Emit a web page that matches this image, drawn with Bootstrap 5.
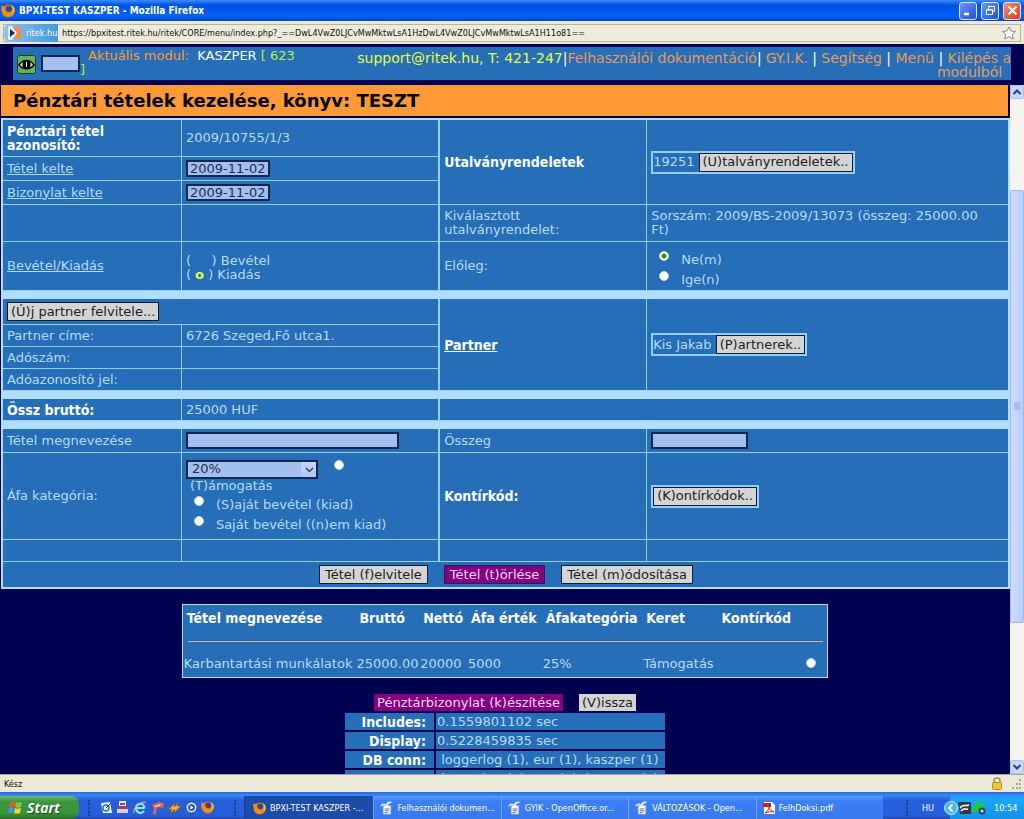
<!DOCTYPE html>
<html lang="hu">
<head>
<meta charset="utf-8">
<meta name="viewport" content="width=device-width, initial-scale=1">
<title>BPXI-TEST KASZPER</title>
<link href="https://cdn.jsdelivr.net/npm/bootstrap@5.3.0/dist/css/bootstrap.min.css" rel="stylesheet">
<style>
:root{--blue:#266eb7;--line:#8fd0ff;--pale:#b0deff;--navy:#000050;--field:#a3bff0;--orange:#ff9a36}
body{font:13px/14px "DejaVu Sans",Verdana,sans-serif;background:var(--navy);color:#b4dcff}
a{color:inherit}
.titlebar{height:21px;background:linear-gradient(#3a8cff,#0050e0 25%,#0062fa 75%,#0048c8);color:#fff;font:bold 10px/20px "DejaVu Sans Condensed",Tahoma,sans-serif;padding:0 3px 0 1px}
.winbtn{width:18px;height:18px;padding:0;border:1px solid #dce8ff;border-radius:3px;background:linear-gradient(135deg,#6c96f0,#2250d0);line-height:0}
.winbtn.close-x{background:linear-gradient(135deg,#f09070,#d83c18)}
.urlbar{height:23px;background:#ece9d8;padding:3px 3px 2px;font:9px/16px "DejaVu Sans Condensed",Tahoma,sans-serif;color:#111}
.urlbox{border:1px solid #b8b5a0;background:#eeebdd}
.site{width:54px;height:18px;background:linear-gradient(90deg,#8cc4f4,#4497e0);border-radius:6px 0 0 6px;color:#fff}
.apphead{margin:3px 13px 5px;min-height:33px;background:var(--blue);font-size:14px;line-height:14px;color:var(--orange)}
.apphead a{text-decoration:none;color:#e89a58}
.lime{color:#b4f43c}.yel{color:#e6ff3c}
.modname{padding-top:2px;margin-right:auto;font-size:13px}
.modname div{text-indent:8px}
.field{background:var(--field);border:2px solid #14284c;border-radius:0;height:17px;padding:0 2px;font:inherit;color:#20304e;min-width:0}
.work{background:var(--navy);overflow:hidden;min-height:0}
.band{background:var(--orange);color:#000;font-weight:bold;font-size:18px;line-height:31px;margin:0 2px 2px 1px;padding-left:12px}
.form-grid{width:calc(100% - 1px);margin-left:1px;table-layout:fixed;border-collapse:separate;border-spacing:0;border:2px solid var(--pale)}
.form-grid td,.form-grid th{background:var(--blue);border-right:1px solid var(--line);border-bottom:1px solid var(--line);padding:0 3px 0 4px;vertical-align:middle;font-weight:normal;height:24px}
.form-grid .half{border-right-width:2px}
.form-grid .fin{border-right:0}
.form-grid .str,.items th,.stats th{font:bold 14px/14px "DejaVu Sans Condensed",Verdana,sans-serif;color:#fff}
.form-grid .gap td{background:var(--pale);height:8px;border:0;line-height:0}
.form-grid .tall td,.form-grid .tall th{height:37px}
.form-grid .mid td,.form-grid .mid th{height:49px}
.form-grid .mid td{padding-top:3px}
.form-grid .big td,.form-grid .big th{height:87px}
.form-grid .low td,.form-grid .low th{height:22px}
.form-grid .fresh .half{height:26px}
.form-grid .act td{height:25px;border-bottom:0}
.key{border:1px solid #141c28;border-radius:0;background:#d4d4d4;color:#222;font:inherit;height:19px;line-height:14px;padding:0 3px;white-space:nowrap}
.act .key{padding:0 5px}
.key.purple{background:#800080;color:#ffd4ff;border-color:#3c1450}
.key.flat{border:0;height:17px}
.framed{border:2px solid var(--line);height:23px}
.dot{appearance:none;width:10px;height:10px;border-radius:50%;background:#fff;border:1px solid #d4d4cc;margin:0;flex:none}
.dot:checked{background:radial-gradient(circle,#389018 0 2px,#fff 3px)}
.opt{height:20px}
.opt label{padding-top:5px}
.opt .dot{margin-top:3px}
.afa{width:132px;height:19px;appearance:none;padding:0 4px;background:linear-gradient(#c4d6fc,#b4c8f4) right/15px 100% no-repeat,var(--field)}
.chev{right:4px;top:6px;pointer-events:none}
.items{width:64%;margin:15px auto 0;table-layout:fixed;background:var(--blue);border:1px solid var(--pale);border-collapse:separate;border-spacing:0;white-space:nowrap}
.items th{padding:6px 0 0 4px;height:26px;vertical-align:top}
.items td{padding:0 0 0 1px;height:26px}
.items .rule{height:20px}
.items hr{margin:0 4px;border:0;border-top:1px solid #4c5c70;border-bottom:1px solid #a8c8e8;opacity:1;height:2px}
.stats{width:324px;border-collapse:separate;border-spacing:2px;white-space:nowrap}
.stats th,.stats td{background:var(--blue);height:17px;padding:0 1px;line-height:14px}
.stats th{width:89px;text-align:right;padding-right:8px}
.sbar{width:14px;background:#f4f3ee}
.sbtn{height:14px;border:1px solid #a8c0f8;border-radius:2px;background:#c8d8fc;padding:0;line-height:0}
.thumb{background:linear-gradient(90deg,#d0dcfe,#b8ccfa);border:1px solid #a0b8f0;border-radius:2px;flex:433}
.before{flex:91}.after{flex:138}
.status{height:18px;background:#ece9d8;border-top:1px solid #a8a694;color:#111;font:9px/16px "DejaVu Sans Condensed",Tahoma,sans-serif;padding:0 2px 0 4px}
.taskbar{height:27px;background:linear-gradient(#2a68d8,#3c88f4 12%,#2560dc 30%,#245edc 85%,#1c48b0);color:#fff;font:9px/22px "DejaVu Sans Condensed",Tahoma,sans-serif}
.start{width:79px;border:0;background:linear-gradient(#6cb86c,#3c963c 25%,#389438 75%,#287028);border-radius:0 8px 8px 0;color:#fff;font:italic bold 14px/22px "Open Sans",sans-serif;padding:0 8px;text-shadow:1px 1px 1px #1c401c}
.quick{width:165px;padding:0 6px 0 17px}
.grip{width:4px;border-left:2px dotted #163c98;height:16px}
.grip.first{margin-left:-8px}
.task{flex:1 1 0;min-width:0;border:0;border-left:1px solid #6ca4fc;background:linear-gradient(#5c9cff,#3c80f4 20%,#3878f0);color:#fff;font:inherit;text-align:left;padding:0 6px;overflow:hidden;white-space:nowrap}
.task.now{background:#1c4caa;border-color:#143c90;padding-left:8px}
.tray{background:linear-gradient(#1c9cf0,#18a8f8 20%,#1290e8);width:74px}
.tray .back{margin-left:-6px}
</style>
</head>
<body class="vh-100 d-flex flex-column overflow-hidden">
<svg class="d-none" aria-hidden="true">
<symbol id="fox" viewBox="0 0 14 14"><circle cx="7" cy="7" r="6.500" fill="#e86a14"/><circle cx="7.6" cy="5.6" r="3.600" fill="#2c4a90"/><path d="M.5 1c2 2 2 1 4.500 2-1 2 0 5 3 5 2 0 3.500-2 3.500-4 2 3 2 6 0 7.500C7 15-1 12 .5 1z" fill="#f48c1c"/><path d="M10 1c4 1 5 6 2 9 0-3 0-6-2-9z" fill="#fcc030"/></symbol>
<symbol id="doc" viewBox="0 0 14 14"><path d="M3.500 4.500h8v9h-8z" fill="#fff" stroke="#abc"/><path d="M5 8h5M5 10h5M5 12h3" stroke="#567"/><path d="M.5 5c2-3 4-3 6-1 1-4 4-4 6-3-2 0-4 1-5 4-2-2-4-2-7 0z" fill="#fff" stroke="#e8f0ff"/></symbol>
</svg>

<header class="titlebar d-flex align-items-center flex-shrink-0">
<svg width="14" height="14" class="me-1 flex-shrink-0"><use href="#fox"/></svg><span class="me-auto">BPXI-TEST KASZPER - Mozilla Firefox</span>
<div class="d-flex gap-1">
<button class="winbtn" aria-label="Kis méret"><svg width="15" height="15"><path d="M3 11h5" stroke="#fff" stroke-width="2.5"/></svg></button>
<button class="winbtn" aria-label="Előző méret"><svg width="15" height="15" fill="none" stroke="#fff"><path d="M5.500 6V3.500h6v5H10M3.500 6.500h6v5h-6zM3 7h7"/></svg></button>
<button class="winbtn close-x" aria-label="Bezárás"><svg width="15" height="15"><path d="M3.500 3.500l8 8m0-8l-8 8" stroke="#fff" stroke-width="2"/></svg></button>
</div>
</header>

<div class="urlbar flex-shrink-0">
<div class="urlbox d-flex align-items-center h-100">
<div class="site d-flex align-items-center ps-1 flex-shrink-0"><svg width="14" height="14" class="me-1"><path d="M3 1h10v12H3z" fill="#f48c48"/><path d="M0 0h4l5 7-5 7H0z" fill="#dcecff"/><path d="M2 3l5 4-5 4z" fill="#1c2c54"/></svg>ritek.hu</div>
<span class="me-auto ps-1 text-nowrap">https://bpxitest.ritek.hu/ritek/CORE/menu/index.php?_==DwL4VwZ0LJCvMwMktwLsA1HzDwL4VwZ0LJCvMwMktwLsA1H11o81==</span>
<svg width="14" height="14" class="me-1" viewBox="0 0 14 14"><path d="M7 1l2 4 4.500.500-3.300 3 1 4.500L7 10.800 2.800 13l1-4.500-3.300-3L5 5z" fill="#fff" stroke="#888"/></svg>
</div>
</div>

<div class="apphead d-flex flex-shrink-0">
<svg width="20" height="20" class="flex-shrink-0 ms-1 mt-2"><rect x=".5" y=".5" width="18" height="18" rx="2" fill="#62b45a" stroke="#1c401c"/><path d="M2 10c4-6 11-6 15 0-4 5-11 5-15 0z" fill="#c8e8b8" stroke="#000" stroke-width="1.500"/><circle cx="9.500" cy="9.500" r="4" fill="#000"/><path d="M9.500 7v5" stroke="#dfd"/></svg>
<input class="field flex-shrink-0 ms-1 mt-2" style="width:39px" aria-label="Modul kód">
<div class="modname"><div><span>Aktuális modul:</span>&nbsp; <span class="text-white">KASZPER</span> <span class="lime">[ 623</span></div><span class="lime">]</span></div>
<div class="text-end text-white pt-1" style="width:68%"><span class="yel">support@ritek.hu, T: 421-247</span>|<a href="#">Felhasználói dokumentáció</a>|<a href="#" class="px-1">GY.I.K.</a>| <a href="#">Segítség</a> | <a href="#">Menü</a> | <a href="#">Kilépés a<br>modulból</a>&nbsp;&nbsp;</div>
</div>

<div class="d-flex flex-grow-1 overflow-hidden">
<main class="work flex-grow-1">
<h1 class="band">Pénztári tételek kezelése, könyv: TESZT</h1>
<table class="form-grid">
<colgroup><col style="width:17.8%"><col style="width:25.7%"><col style="width:20.6%"><col style="width:35.9%"></colgroup>
<tr class="tall"><th class="str">Pénztári tétel<br>azonosító:</th><td class="half">2009/10755/1/3</td><th class="str" rowspan="3">Utalványrendeletek</th><td class="fin" rowspan="3"><div class="framed d-inline-flex align-items-center"><span class="pe-1">19251</span><button class="key">(U)talványrendeletek..</button></div></td></tr>
<tr><th><a href="#">Tétel kelte</a></th><td class="half"><input class="field" style="width:84px" value="2009-11-02" aria-label="Tétel kelte"></td></tr>
<tr><th><a href="#">Bizonylat kelte</a></th><td class="half"><input class="field" style="width:84px" value="2009-11-02" aria-label="Bizonylat kelte"></td></tr>
<tr class="tall"><td></td><td class="half"></td><th>Kiválasztott<br>utalványrendelet:</th><td class="fin">Sorszám: 2009/BS-2009/13073 (összeg: 25000.00<br>Ft)</td></tr>
<tr class="mid"><th><a href="#">Bevétel/Kiadás</a></th><td class="half">(&nbsp;&nbsp;&nbsp; &nbsp;) Bevétel<br>( <b class="yel">o</b> ) Kiadás</td><th>Előleg:</th><td class="fin">
<div class="opt d-flex ps-2"><input class="dot" type="radio" name="elo" id="nem" checked><label class="ms-2 ps-1" for="nem">Ne(m)</label></div>
<div class="opt d-flex ps-2"><input class="dot" type="radio" name="elo" id="igen"><label class="ms-2 ps-1" for="igen">Ige(n)</label></div></td></tr>
<tr class="gap"><td colspan="4"></td></tr>
<tr class="fresh"><td class="half" colspan="2"><button class="key d-block">(Ú)j partner felvitele...</button></td><th class="str" rowspan="4"><a href="#">Partner</a></th><td class="fin" rowspan="4"><div class="framed d-inline-flex align-items-center">Kis Jakab&nbsp;<button class="key">(P)artnerek..</button></div></td></tr>
<tr class="low"><th>Partner címe:</th><td class="half">6726 Szeged,Fő utca1.</td></tr>
<tr class="low"><th>Adószám:</th><td class="half"></td></tr>
<tr class="low"><th>Adóazonosító jel:</th><td class="half"></td></tr>
<tr class="gap"><td colspan="4"></td></tr>
<tr class="low"><th class="str">Össz bruttó:</th><td class="half">25000 HUF</td><td class="fin" colspan="2"></td></tr>
<tr class="gap"><td colspan="4"></td></tr>
<tr><th><label for="megn">Tétel megnevezése</label></th><td class="half"><input class="field" style="width:213px" id="megn"></td><th><label for="ossz">Összeg</label></th><td class="fin"><input class="field" style="width:97px" id="ossz"></td></tr>
<tr class="big"><th><label for="afa">Áfa kategória:</label></th><td class="half">
<div class="d-flex"><div class="position-relative"><select class="field afa" id="afa"><option>20%</option></select><svg class="chev position-absolute" width="9" height="8"><path d="M1 2l3.500 3.500L8 2" fill="none" stroke="#346" stroke-width="1.500"/></svg></div><input class="dot ms-3" type="radio" name="keret" id="tam"></div>
<div class="ps-1"><label for="tam">(T)ámogatás</label></div>
<div class="opt d-flex ps-2"><input class="dot" type="radio" name="keret" id="sk"><label class="ms-2 ps-1" for="sk">(S)aját bevétel (kiad)</label></div>
<div class="opt d-flex ps-2"><input class="dot" type="radio" name="keret" id="sn"><label class="ms-2 ps-1" for="sn">Saját bevétel ((n)em kiad)</label></div></td>
<th class="str">Kontírkód:</th><td class="fin"><div class="framed d-inline-flex align-items-center"><button class="key">(K)ontírkódok..</button></div></td></tr>
<tr class="low"><td></td><td class="half"></td><td></td><td class="fin"></td></tr>
<tr class="act"><td class="fin" colspan="4"><div class="d-flex justify-content-center gap-3"><button class="key">Tétel (f)elvitele</button><button class="key purple">Tétel (t)örlése</button><button class="key">Tétel (m)ódosítása</button></div></td></tr>
</table>

<table class="items">
<colgroup><col style="width:26.8%"><col style="width:9.9%"><col style="width:7.4%"><col style="width:11.6%"><col style="width:15.6%"><col style="width:11.7%"><col style="width:13.6%"><col></colgroup>
<tr><th>Tétel megnevezése</th><th>Bruttó</th><th>Nettó</th><th>Áfa érték</th><th>Áfakategória</th><th>Keret</th><th>Kontírkód</th><th></th></tr>
<tr><td colspan="8" class="rule"><hr></td></tr>
<tr><td>Karbantartási munkálatok</td><td>25000.00</td><td>20000</td><td>5000</td><td>25%</td><td>Támogatás</td><td></td><td><input class="dot" type="radio" name="sor" aria-label="Karbantartási munkálatok"></td></tr>
</table>

<div class="d-flex justify-content-center gap-3 mt-3"><button class="key flat purple">Pénztárbizonylat (k)észítése</button><button class="key flat">(V)issza</button></div>
<table class="stats mx-auto">
<tr><th>Includes:</th><td>0.1559801102 sec</td></tr>
<tr><th>Display:</th><td>0.5228459835 sec</td></tr>
<tr><th>DB conn:</th><td>&nbsp;loggerlog (1), eur (1), kaszper (1)</td></tr>
<tr><th>DB query:</th><td>&nbsp;loggerlog (2), eur (2), kaszper (4)</td></tr>
</table>
</main>
<div class="sbar d-flex flex-column flex-shrink-0">
<button class="sbtn" aria-label="Fel"><svg width="10" height="8"><path d="M1.500 6L5 2.500 8.500 6" fill="none" stroke="#346" stroke-width="2"/></svg></button>
<div class="before"></div><div class="thumb d-flex align-items-center justify-content-center"><svg width="8" height="8"><path d="M1 1h6M1 3h6M1 5h6M1 7h6" stroke="#8ca8e8"/></svg></div><div class="after"></div>
<button class="sbtn" aria-label="Le"><svg width="10" height="8"><path d="M1.500 2L5 5.500 8.500 2" fill="none" stroke="#346" stroke-width="2"/></svg></button>
</div>
</div>

<div class="status d-flex align-items-center flex-shrink-0"><span class="me-auto">Kész</span><svg width="12" height="13" class="me-2"><path d="M3 6V4a3 3 0 016 0v2" fill="none" stroke="#a89040" stroke-width="1.500"/><rect x="1.500" y="5.500" width="9" height="7" rx="1" fill="#f4c430" stroke="#b88c1c"/></svg><svg width="11" height="12" fill="#a8a694"><path d="M8 1h2v2H8zM5 5h2v2H5zM8 5h2v2H8zM1 9h2v2H1zM5 9h2v2H5zM8 9h2v2H8z"/></svg></div>

<footer class="taskbar d-flex flex-shrink-0 align-items-stretch pt-1">
<button class="start d-flex align-items-center"><svg width="15" height="15" class="me-1 flex-shrink-0" viewBox="0 0 15 15"><path d="M2 2c2-1 3-1 5 0L6 7C4 6 3 6 1 7z" fill="#f0562c"/><path d="M8 2c2 1 3 1 6 0l-1 5c-2 1-4 1-6 0z" fill="#84c840"/><path d="M1 8c2-1 3-1 5 0l-1 5c-2-1-3-1-5 0z" fill="#4c8cf4"/><path d="M7 8c2 1 3 1 6 0l-1 5c-2 1-4 1-6 0z" fill="#fcd03c"/></svg>Start</button>
<div class="quick d-flex align-items-center justify-content-between">
<span class="grip first me-1"></span>
<svg width="13" height="13"><path d="M1 2l9-1 2 11H3z" fill="#e8f4ff"/><circle cx="6" cy="7" r="3" fill="none" stroke="#2878c0" stroke-width="1.500"/><path d="M6 7l5-5" stroke="#345"/></svg>
<svg width="13" height="13"><path d="M3 0h7v5H3z" fill="#e8e8ff"/><path d="M1 6h11v6H1z" fill="#d0d0e8"/><path d="M1 6h11v2H1zM4 2h5v2H4z" fill="#b83c48"/></svg>
<svg width="14" height="13" fill="none"><path d="M11 10c-4 4-8 1-8-3s6-6 8-2c0 1 1 2 0 2H4" stroke="#8ce4fc" stroke-width="2"/><path d="M1 12C-1 7 8 0 13 1" stroke="#f4c830"/></svg>
<svg width="14" height="13"><path d="M1 4l7-3 5 1-1 6-3-2-3 1-1 6H2l1-6z" fill="#e86048"/><path d="M3 5l7-2-1 2-5 1z" fill="#fcd8c0"/></svg>
<svg width="13" height="13"><path d="M0 9l7-7-1 4 5-5-2 4h4l-7 7 1-4-5 5 2-5z" fill="#fcb424" stroke="#845010" stroke-width=".6"/></svg>
<svg width="13" height="13"><circle cx="6.500" cy="6.500" r="5.500" fill="#e8f0fc" stroke="#346"/><circle cx="6.500" cy="6.500" r="3.500" fill="#2860b8"/><path d="M5.500 4.500l3 2-3 2z" fill="#fff"/></svg>
<svg width="13" height="13"><use href="#fox"/></svg>
<span class="grip ms-3"></span>
</div>
<nav class="d-flex flex-grow-1" style="max-width:639px">
<button class="task now"><svg width="13" height="13" class="me-1"><use href="#fox"/></svg>BPXI-TEST KASZPER -...</button>
<button class="task"><svg width="13" height="14" class="me-1"><use href="#doc"/></svg>Felhasználói dokumen...</button>
<button class="task"><svg width="13" height="14" class="me-1"><use href="#doc"/></svg>GYIK - OpenOffice.or...</button>
<button class="task"><svg width="13" height="14" class="me-1"><use href="#doc"/></svg>VÁLTOZÁSOK - Open...</button>
<button class="task"><svg width="12" height="14" class="me-1"><path d="M1 1h8l3 3v9H1z" fill="#fff"/><path d="M0 2h8v4H0z" fill="#d02020"/><path d="M2 12c3-2 4-4 4-6 1 3 2 4 5 5-3-1-6 0-9 1z" fill="none" stroke="#d02020"/></svg>FelhDoksi.pdf</button>
</nav>
<div class="ms-auto d-flex align-items-center"><span class="grip me-1"></span><span class="mx-2">HU</span>
<div class="tray d-flex align-items-center h-100 ms-2"><svg width="14" height="14" class="back flex-shrink-0"><circle cx="7" cy="7" r="6.500" fill="#4cb4fc" stroke="#cef"/><path d="M8.500 3.500L5 7l3.500 3.500" fill="none" stroke="#fff" stroke-width="2"/></svg><svg width="13" height="14" class="flex-shrink-0"><path d="M0 1h13v12H2z" fill="#303840"/><path d="M2 7c3-5 5-1 9-3M3 10c3-4 4-1 7-2" stroke="#fff" fill="none" stroke-width="1.500"/></svg><svg width="15" height="14" class="flex-shrink-0"><path d="M4 1h8v8H4zM1 6h6v5H1z" fill="#20c83c"/><circle cx="11" cy="10" r="3.500" fill="#284858"/><circle cx="11" cy="10" r="1.500" fill="#cde"/></svg><span class="ms-2">10:54</span></div></div>
</footer>
<script src="https://cdn.jsdelivr.net/npm/bootstrap@5.3.0/dist/js/bootstrap.bundle.min.js"></script>
</body>
</html>
